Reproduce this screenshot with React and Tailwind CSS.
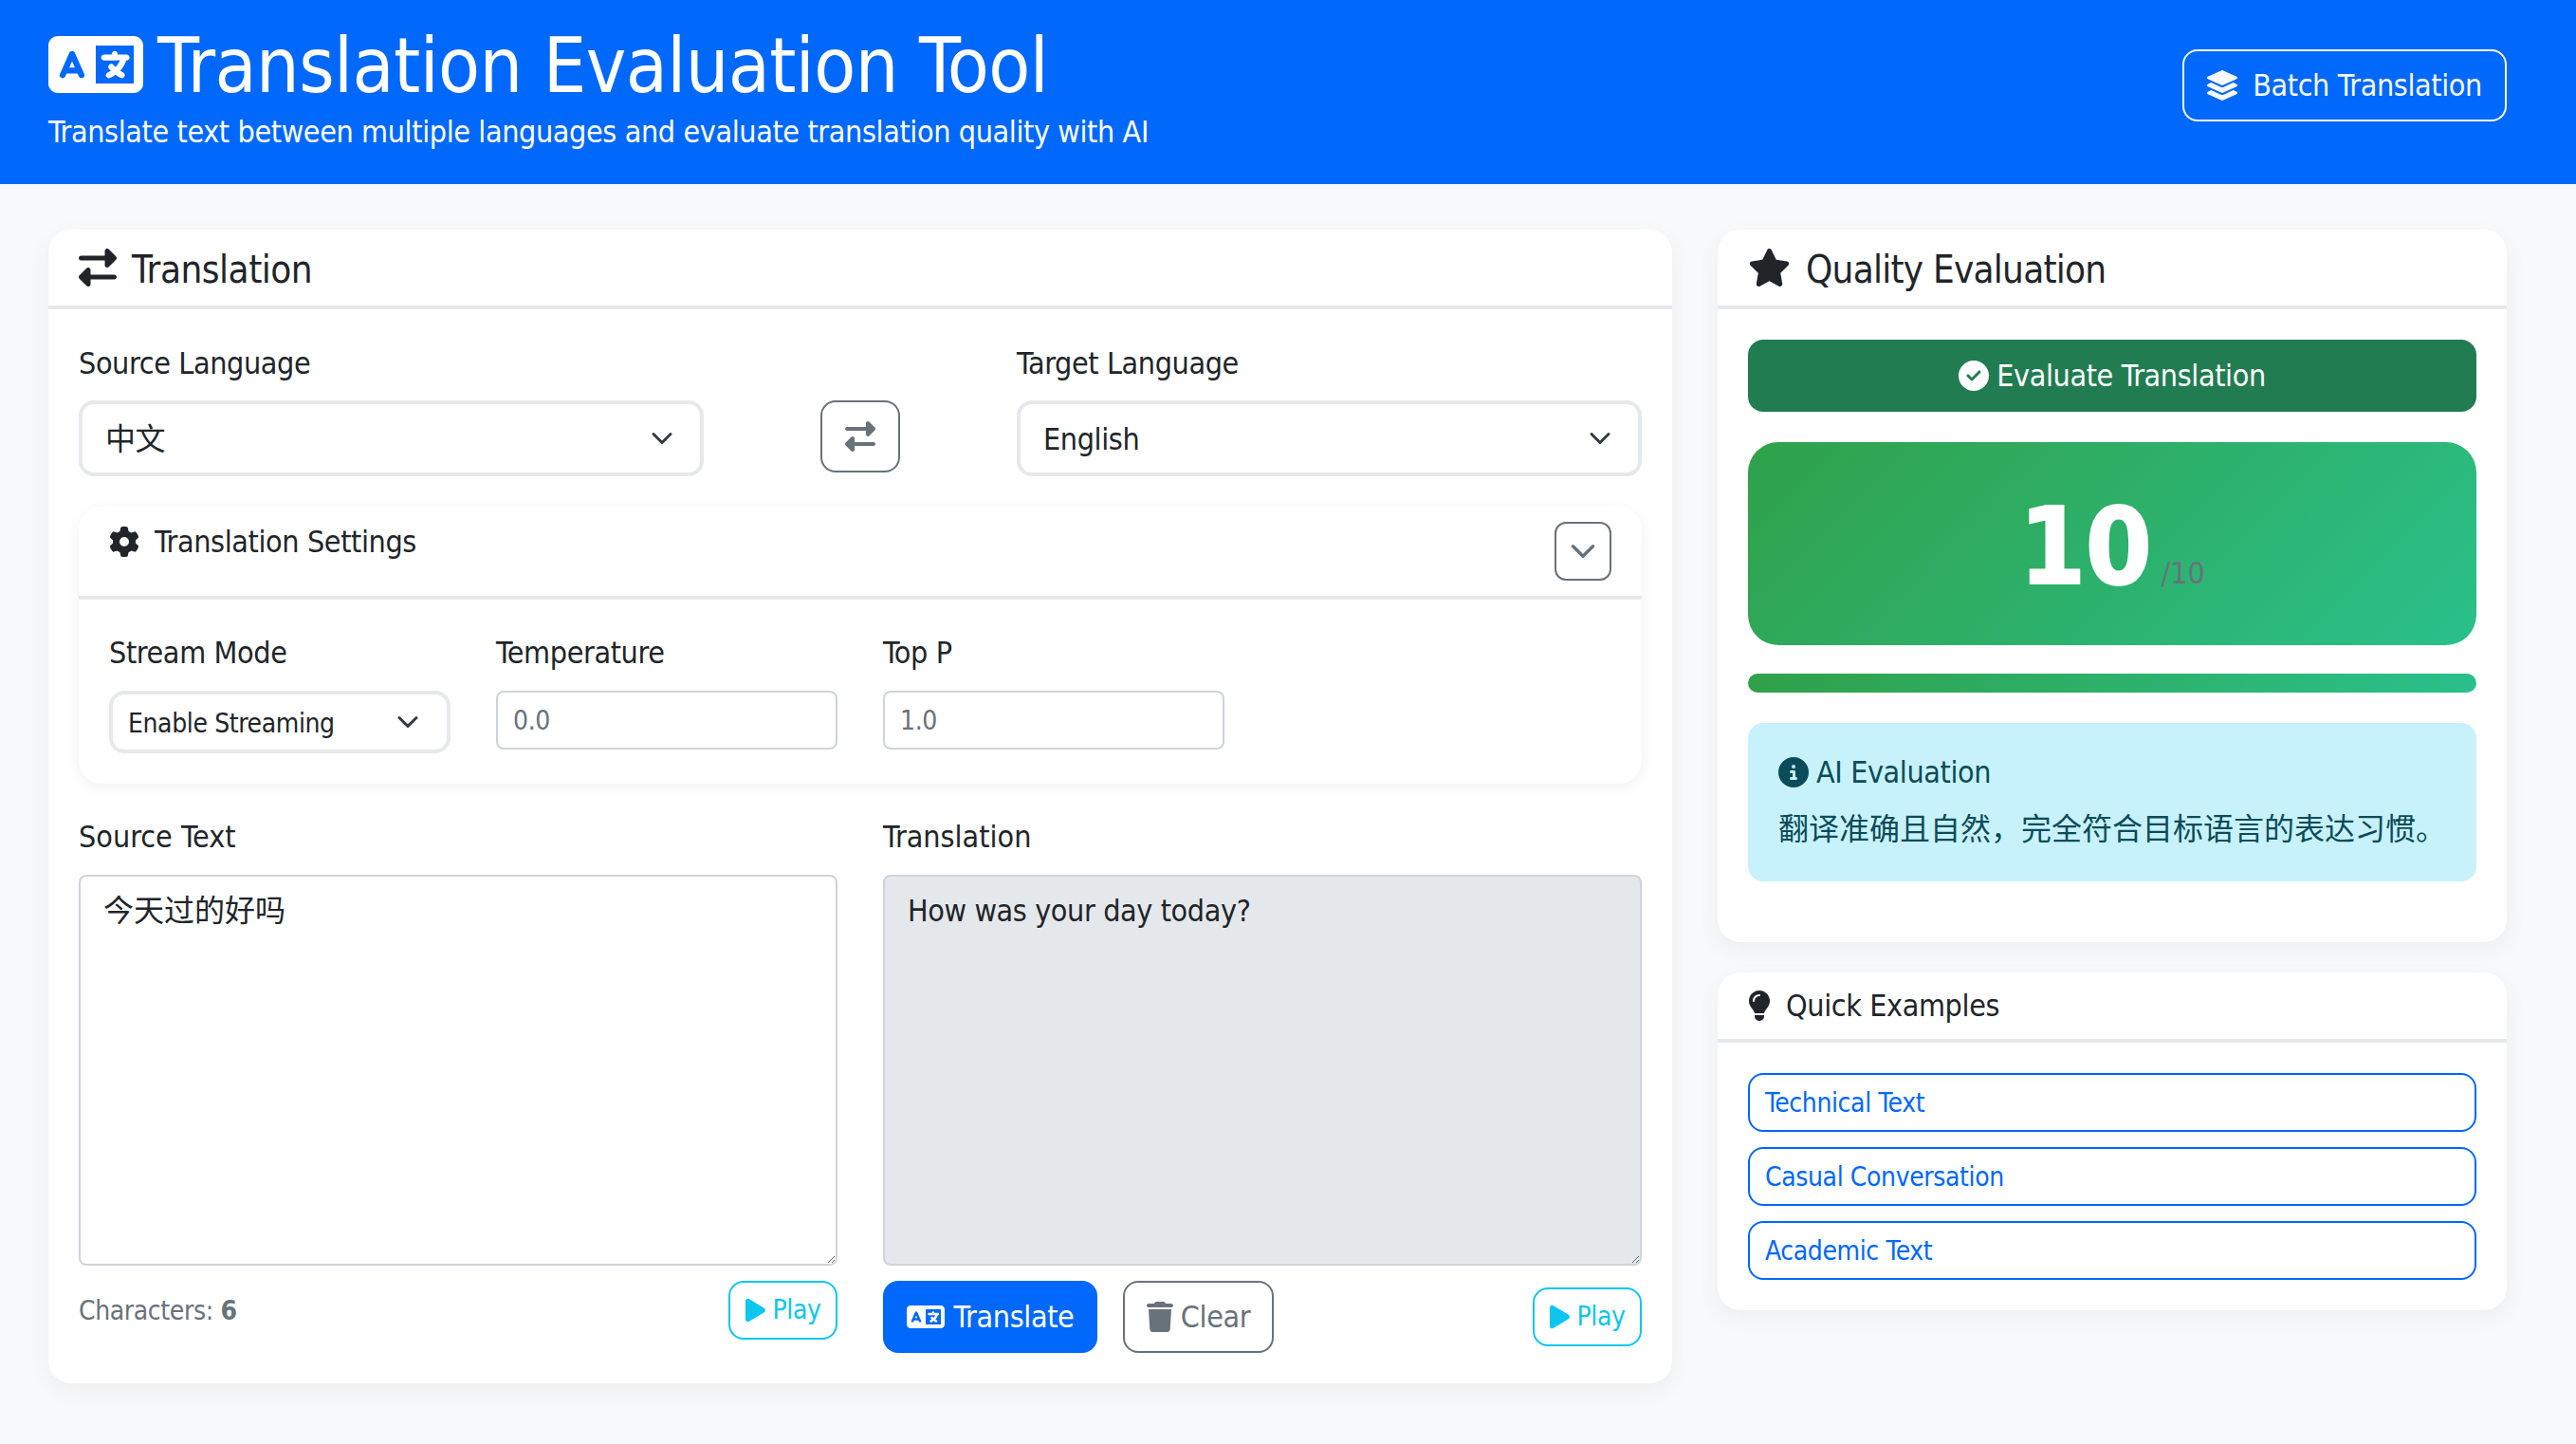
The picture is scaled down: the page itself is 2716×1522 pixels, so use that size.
import React from "react";
import { FaLanguage, FaRightLeft, FaStar, FaCircleCheck, FaCircleInfo, FaLightbulb, FaGear, FaPlay, FaTrash } from "react-icons/fa6";
import { FaLayerGroup } from "react-icons/fa";

const Chevron = ({ className }) => (
  <svg viewBox="0 0 16 16" fill="none" stroke="currentColor" strokeWidth="2" strokeLinecap="round" strokeLinejoin="round" className={className}>
    <path d="m2 5 6 6 6-6" />
  </svg>
);

const LangSelect = ({ value }) => (
  <div className="relative">
    <select defaultValue={value} className="appearance-none w-full h-[80px] bg-white border-4 border-[#e6e9ec] rounded-[16px] pl-[24px] pr-[72px] pt-[2px] text-[32px] text-[#212529] outline-none">
      <option>{value}</option>
    </select>
    <Chevron className="absolute right-[32px] top-[28px] w-[24px] h-[24px] text-[#343a40] pointer-events-none" />
  </div>
);

const PlayBtn = () => (
  <button className="h-[62px] w-[115px] flex items-center justify-center gap-[8px] border-2 border-[#0dc6ee] rounded-[16px] text-[#0dc6ee] text-[28px] bg-transparent">
    <FaPlay className="w-[21px] h-[28px]" />
    Play
  </button>
);

const Example = ({ children }) => (
  <button className="h-[62px] w-full text-left px-[16px] pt-[2px] border-2 border-[#0068fa] rounded-[16px] text-[#0068fa] text-[28px] bg-white">{children}</button>
);

export default function App() {
  return (
    <div className="min-h-[1522px] bg-[#f8f9fa] text-[#212529] text-[32px] leading-[1.5] tracking-[-0.012em] font-['DejaVu_Sans','Noto_Sans_CJK_SC',sans-serif] [font-stretch:condensed]">
      <header className="h-[194px] bg-[#0068fa] text-white pl-[51px] pr-[73px] flex items-center justify-between">
        <div className="pb-[10px]">
          <h1 className="flex items-center text-[80px] leading-[1.2] gap-[15px] tracking-[-0.58px]">
            <FaLanguage className="w-[100px] h-[80px] mb-[3px]" />
            Translation Evaluation Tool
          </h1>
          <p className="text-[32px] leading-[48px] -mt-[3px]">Translate text between multiple languages and evaluate translation quality with AI</p>
        </div>
        <button className="h-[76px] mt-[-14px] w-[342px] flex items-center justify-center gap-[16px] border-2 border-[#f8f9fa] rounded-[16px] text-[#f8f9fa] text-[32px]">
          <FaLayerGroup className="w-[32px] h-[32px]" />
          Batch Translation
        </button>
      </header>

      <main className="flex gap-[48px] pl-[51px] pr-[73px] pt-[48px] items-start">
        <section className="w-[1712px] bg-white rounded-[24px] shadow-[0_8px_24px_rgba(0,0,0,0.05)]">
          <div className="h-[84px] border-b-4 border-[#e6e9ec] px-[32px] flex items-center gap-[16px]">
            <FaRightLeft className="w-[40px] h-[40px]" />
            <h2 className="text-[40px] leading-[48px] pt-[3px] tracking-[-0.48px]">Translation</h2>
          </div>
          <div className="p-[32px]">
            <div className="grid grid-cols-[659px_1fr_659px] gap-[48px]">
              <div>
                <label className="block mb-[15px] pt-[1px]">Source Language</label>
                <LangSelect value="中文" />
              </div>
              <div className="flex justify-center items-start pt-[64px]">
                <button className="w-[84px] h-[76px] border-2 border-[#68727a] rounded-[16px] flex items-center justify-center text-[#68727a]">
                  <FaRightLeft className="w-[32px] h-[32px]" />
                </button>
              </div>
              <div>
                <label className="block mb-[15px] pt-[1px]">Target Language</label>
                <LangSelect value="English" />
              </div>
            </div>

            <div className="mt-[32px] rounded-[24px] shadow-[0_4px_16px_rgba(0,0,0,0.06)] bg-white">
              <div className="h-[98px] border-b-4 border-[#e6e9ec] pl-[32px] pr-[32px] py-[16px] flex justify-between items-start">
                <div className="flex items-center gap-[16px] text-[32px] leading-[48px] -mt-[3px]">
                  <FaGear className="w-[32px] h-[32px]" />
                  Translation Settings
                </div>
                <button className="w-[60px] h-[62px] border-2 border-[#68727a] rounded-[12px] flex items-center justify-center text-[#68727a]">
                  <Chevron className="w-[28px] h-[28px]" />
                </button>
              </div>
              <div className="p-[32px] grid grid-cols-4 gap-[48px]">
                <div>
                  <label className="block mb-[16px]">Stream Mode</label>
                  <div className="relative">
                    <select className="appearance-none w-full h-[66px] bg-white border-4 border-[#e6e9ec] rounded-[16px] pl-[16px] pt-[3px] text-[28px] outline-none">
                      <option>Enable Streaming</option>
                    </select>
                    <Chevron className="absolute right-[33px] top-[21px] w-[24px] h-[24px] text-[#343a40] pointer-events-none" />
                  </div>
                </div>
                <div>
                  <label className="block mb-[16px]">Temperature</label>
                  <input defaultValue="0.0" className="w-full h-[62px] border-2 border-[#ced4da] rounded-[8px] px-[16px] text-[28px] text-[#68727a] outline-none" />
                </div>
                <div>
                  <label className="block mb-[16px]">Top P</label>
                  <input defaultValue="1.0" className="w-full h-[62px] border-2 border-[#ced4da] rounded-[8px] px-[16px] text-[28px] text-[#68727a] outline-none" />
                </div>
              </div>
            </div>

            <div className="mt-[32px] grid grid-cols-2 gap-[48px]">
              <div>
                <label className="block mb-[16px] tracking-normal">Source Text</label>
                <textarea defaultValue="今天过的好吗" className="block w-full h-[412px] border-2 border-[#ced4da] rounded-[8px] px-[24px] py-[12px] text-[32px] tracking-normal outline-none" />
                <div className="mt-[16px] flex items-center justify-between">
                  <span className="text-[28px] text-[#68727a] pt-[2px]">Characters: <b>6</b></span>
                  <PlayBtn />
                </div>
              </div>
              <div>
                <label className="block mb-[16px] tracking-normal">Translation</label>
                <textarea readOnly defaultValue="How was your day today?" className="block w-full h-[412px] border-2 border-[#ced4da] bg-[#e5e8eb] rounded-[8px] px-[24px] py-[12px] text-[32px] outline-none" />
                <div className="mt-[16px] flex items-center">
                  <button className="h-[76px] w-[226px] bg-[#0068fa] text-white rounded-[16px] flex items-center justify-center gap-[10px]">
                    <FaLanguage className="w-[40px] h-[32px]" />
                    Translate
                  </button>
                  <button className="h-[76px] w-[159px] ml-[27px] border-2 border-[#68727a] text-[#68727a] rounded-[16px] flex items-center justify-center gap-[8px]">
                    <FaTrash className="w-[28px] h-[32px]" />
                    Clear
                  </button>
                  <div className="ml-auto"><PlayBtn /></div>
                </div>
              </div>
            </div>
          </div>
        </section>

        <aside className="w-[832px] flex flex-col gap-[32px]">
          <section className="bg-white rounded-[24px] shadow-[0_8px_24px_rgba(0,0,0,0.05)]">
            <div className="h-[84px] border-b-4 border-[#e6e9ec] px-[32px] flex items-center gap-[16px]">
              <FaStar className="w-[45px] h-[40px]" />
              <h2 className="text-[40px] leading-[48px] pt-[3px] tracking-[-0.75px]">Quality Evaluation</h2>
            </div>
            <div className="pt-[32px] px-[32px] pb-[64px]">
              <button className="w-full h-[76px] bg-[#217c52] text-white rounded-[16px] flex items-center justify-center gap-[8px]">
                <FaCircleCheck className="w-[32px] h-[32px]" />
                Evaluate Translation
              </button>
              <div className="mt-[32px] h-[214px] rounded-[32px] bg-[linear-gradient(135deg,#30a14a,#2ac08b)] flex items-baseline justify-center pt-[43px]">
                <span className="text-[112px] leading-[1.2] font-bold text-white [-webkit-text-stroke:2px_white]">10</span>
                <span className="text-[32px] text-[#68727a] ml-[10px] tracking-normal">/10</span>
              </div>
              <div className="mt-[30px] h-[20px] rounded-[10px] bg-[linear-gradient(90deg,#30a14a,#2ac08b)]" />
              <div className="mt-[32px] h-[167px] rounded-[16px] bg-[#c8f2fb] text-[#0a4c5a] p-[32px] pt-[28px]">
                <div className="flex items-center gap-[8px] leading-[48px]">
                  <FaCircleInfo className="w-[32px] h-[32px]" />
                  AI Evaluation
                </div>
                <p className="mt-[12px] leading-[48px] tracking-normal">翻译准确且自然，完全符合目标语言的表达习惯。</p>
              </div>
            </div>
          </section>
          <section className="bg-white rounded-[24px] shadow-[0_8px_24px_rgba(0,0,0,0.05)]">
            <div className="h-[74px] border-b-4 border-[#e6e9ec] px-[32px] flex items-center gap-[16px]">
              <FaLightbulb className="w-[24px] h-[32px]" />
              <h3 className="text-[32px] leading-[48px]">Quick Examples</h3>
            </div>
            <div className="p-[32px] flex flex-col gap-[16px]">
              <Example>Technical Text</Example>
              <Example>Casual Conversation</Example>
              <Example>Academic Text</Example>
            </div>
          </section>
        </aside>
      </main>
    </div>
  );
}
